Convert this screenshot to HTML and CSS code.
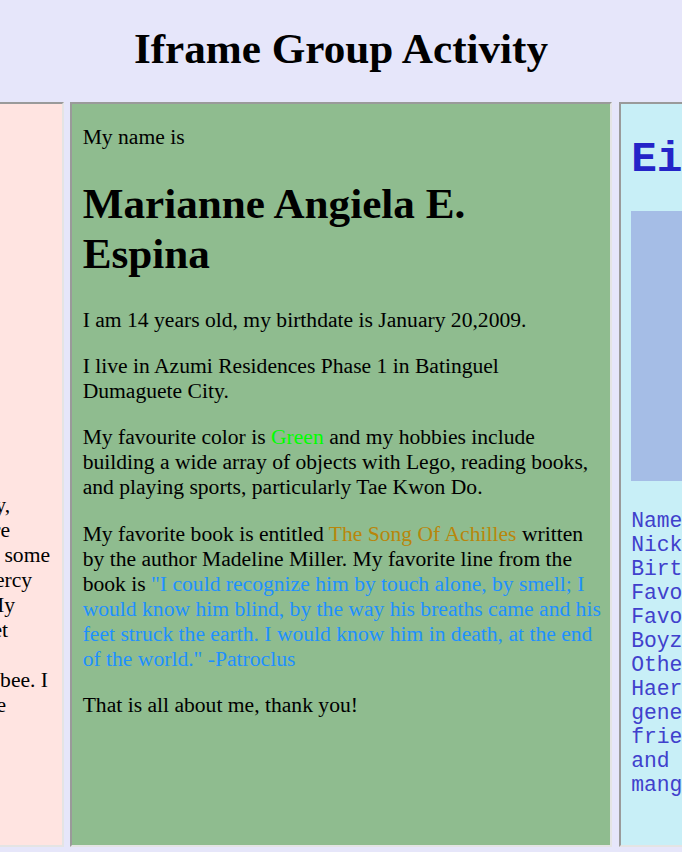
FILE: index.html
```html
<!DOCTYPE html>
<html lang="en">
<head>
<meta charset="utf-8">
<title>Iframe Group Activity</title>
<link rel="stylesheet" href="styles.css">
</head>
<body>
<header class="page-header">
  <h1 class="page-title">Iframe Group Activity</h1>
</header>
<main class="frames">
  <section class="frame frame-pink">
    <div class="note">
      <div class="line e1">I spend my free time with my family,</div>
      <div class="line e2">especially on weekends when we are</div>
      <div class="line e3">at home. I also enjoy reading some</div>
      <div class="line e4">books, my favorite series is Percy</div>
      <div class="line e5">Jackson and the Olympians. My</div>
      <div class="line e6">favorite animal is a cat and I have a pet</div>
      <div class="line e7">cat named Mochi.</div>
      <div class="line e8">My favorite food is Jollibee. I</div>
      <div class="line e9">also love to eat ice cream and cake</div>
    </div>
  </section>
  <section class="frame frame-green">
    <p class="text">My name is</p>
    <h1 class="name">Marianne Angiela E.<br>Espina</h1>
    <p class="text">I am 14 years old, my birthdate is January 20,2009.</p>
    <p class="text">I live in Azumi Residences Phase 1 in Batinguel<br>Dumaguete City.</p>
    <p class="text">My favourite color is <span class="c-green">Green</span> and my hobbies include building a wide array of objects with Lego, reading books, and playing sports, particularly Tae Kwon Do.</p>
    <p class="text">My favorite book is entitled <span class="c-book">The Song Of Achilles</span> written by the author Madeline Miller. My favorite line from the book is <span class="c-quote">"I could recognize him by touch alone, by smell; I would know him blind, by the way his breaths came and his feet struck the earth. I would know him in death, at the end of the world." -Patroclus</span></p>
    <p class="text">That is all about me, thank you!</p>
  </section>
  <section class="frame frame-cyan">
    <h1 class="mono-title">Eira Sofia Lim</h1>
    <div class="photo"></div>
    <p class="mono-text">Name: Eira Sofia Lim
Nickname: Eira
Birthday: May 5, 2009
Favorite color: Lavender
Favorite K-pop group: Stray Kids and The
Boyz
Other information: I am a fan of Kang
Haerin from NewJeans. I am a very
generous person and I love to hang out
friends. I like reading, drawing, anime
and 
manga.</p>
  </section>
</main>
</body>
</html>
```
FILE: styles.css
```css
html, body {
  margin: 0;
  padding: 0;
  background: #e6e6fa;
  overflow: hidden;
}

body {
  width: 682px;
  height: 852px;
  font-family: "Liberation Serif", "Times New Roman", serif;
  font-size: 21.6px;
  color: #000;
}

.page-header {
  padding: 24px 0 29px;
}

.page-title {
  margin: 0;
  text-align: center;
  font-size: 43.2px;
  line-height: 49px;
  font-weight: bold;
}

.frames {
  display: flex;
  justify-content: center;
  gap: 6.5px;
}

.frame {
  flex: 0 0 auto;
  box-sizing: border-box;
  width: 542px;
  height: 745px;
  padding: 0 8.5px 0 10.67px;
  border: 2px solid;
  border-color: #9a9a9a #e4e4e4 #e4e4e4 #9a9a9a;
  overflow: hidden;
}

.frame-pink {
  background: #ffe4e1;
  padding-right: 10.67px;
}

.frame-green {
  background: #8fbc8f;
}

.frame-cyan {
  background: #c8eff7;
  color: #2424c8;
  font-family: "Liberation Mono", "Courier New", monospace;
}

/* left frame */
.note {
  margin-top: 388.5px;
}

.line {
  white-space: nowrap;
  text-align: right;
  line-height: 25px;
}

.e1 { margin-right: 40.8px; }
.e2 { margin-right: 40.8px; }
.e3 { margin-right: 0.8px; }
.e4 { margin-right: 18.8px; }
.e5 { margin-right: 35.8px; }
.e6 { margin-right: 42.8px; }
.e7 { margin-right: 120px; }
.e8 { margin-right: 2.8px; }
.e9 { margin-right: 44.8px; }

/* middle frame */
.text {
  margin: 21.33px 0;
  line-height: 25px;
}

.name {
  margin: 28.6px 0;
  font-size: 43.2px;
  line-height: 50px;
  font-weight: bold;
}

.c-green { color: #00ff00; }
.c-book { color: #b8860b; }
.c-quote { color: #1e90ff; }

/* right frame */
.mono-title {
  margin: 30.6px 0 0;
  font-size: 42.67px;
  font-weight: bold;
  white-space: nowrap;
}

.photo {
  width: 500px;
  height: 270px;
  margin: 27px 0 28px;
  background: #a5bde6;
}

.mono-text {
  margin: 0;
  white-space: pre;
  font-size: 21.33px;
  color: #4040cc;
}
```
